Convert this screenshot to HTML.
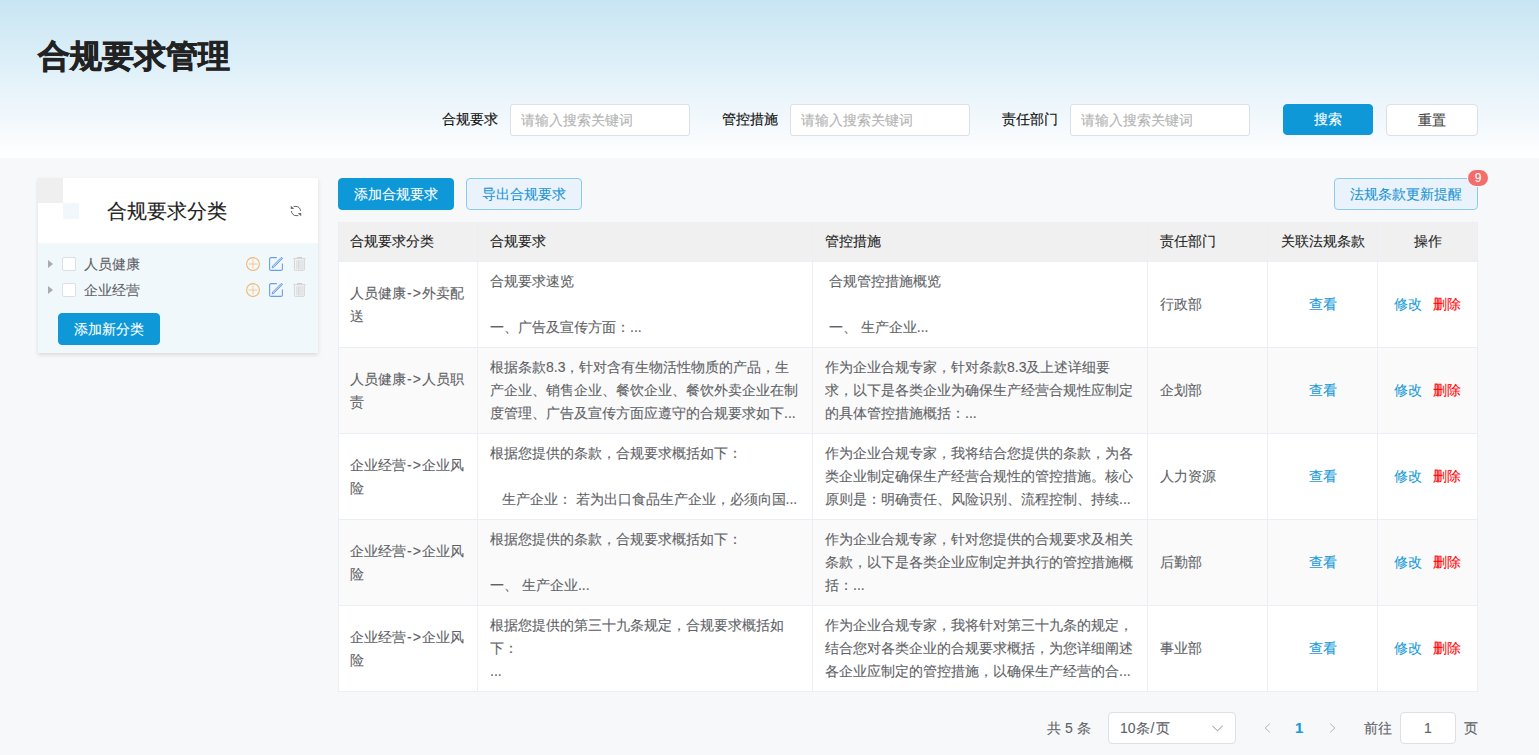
<!DOCTYPE html>
<html><head><meta charset="utf-8">
<style>
*{box-sizing:border-box;margin:0;padding:0}
html,body{width:1539px;height:755px;overflow:hidden}
body{font-family:"Liberation Sans",sans-serif;background:#f7f8fa;position:relative;color:#333;-webkit-text-stroke:0.1px currentColor}
.hdr{position:absolute;left:0;top:0;width:1539px;height:158px;background:linear-gradient(180deg,#c8e5f3 0%,#d8edf7 30%,#e8f4fa 58%,#f4f9fd 80%,#ffffff 100%)}
.abs{position:absolute}
.title{left:38px;top:34px;font-size:32px;font-weight:bold;-webkit-text-stroke:0.7px #222;color:#222;line-height:44px;white-space:nowrap}
.lbl{font-size:14px;color:#111;-webkit-text-stroke:0.15px #111;line-height:20px;white-space:nowrap}
.inp{background:#fff;border:1px solid #dcdfe6;border-radius:3px;height:32px;width:180px;font-size:14px;color:#b3b3b3;line-height:30px;padding-left:10px;white-space:nowrap}
.btn{border-radius:4px;font-size:14px;text-align:center;white-space:nowrap}
.bp{background:#0e98d8;color:#fff;border:1px solid #0e98d8}
.bw{background:#fff;color:#444;border:1px solid #dcdfe6}
.bl{background:#eaf3fb;color:#1b94d4;border:1px solid #8ccbef}

.panel{left:38px;top:178px;width:280px;height:175px;background:#f1f8fc;box-shadow:0 2px 4px rgba(0,0,0,0.12)}
.phead{position:absolute;left:0;top:0;width:280px;height:65px;background:#fff}
.ptitle{position:absolute;left:69px;top:19px;font-size:20px;color:#222;line-height:28px;white-space:nowrap}
.trow{position:absolute;left:0;width:280px;height:26px}
.tri{position:absolute;left:10px;top:8px;width:0;height:0;border-top:4px solid transparent;border-bottom:4px solid transparent;border-left:5px solid #a8abb2}
.chk{position:absolute;left:24px;top:5px;width:14px;height:14px;border:1px solid #dcdfe6;border-radius:2px;background:#fff}
.tlbl{position:absolute;left:46px;top:2px;font-size:14px;line-height:20px;color:#606266;white-space:nowrap}
.ico{position:absolute;top:5px;width:14px;height:14px}

.tbl{left:338px;top:222px;width:1140px;border-left:1px solid #ebeef5;border-top:0}
table{border-collapse:separate;border-spacing:0;table-layout:fixed;width:1139px}
th:first-child,td:first-child{padding-left:11px!important}
th,td{border-right:1px solid #ebeef5;border-bottom:1px solid #ebeef5;font-size:14px;text-align:left;padding:0 12px;white-space:nowrap;overflow:hidden}
th{height:40px;background:#f0f0f0;color:#222;font-weight:normal;line-height:20px;padding-bottom:2px}
td{height:86px;color:#606266;line-height:23px;vertical-align:middle}
tr.st td{background:#fafafa}
tr.w td{background:#fff}
td.c,th.c{text-align:center}
.lk{color:#1a9bd7}
.ar{letter-spacing:1px;padding-left:1px}
.rd{color:#f00}
</style></head><body>
<div class="hdr"></div>
<div class="abs title">合规要求管理</div>

<div class="abs lbl" style="left:442px;top:109px">合规要求</div>
<div class="abs inp" style="left:510px;top:104px">请输入搜索关键词</div>
<div class="abs lbl" style="left:722px;top:109px">管控措施</div>
<div class="abs inp" style="left:790px;top:104px">请输入搜索关键词</div>
<div class="abs lbl" style="left:1002px;top:109px">责任部门</div>
<div class="abs inp" style="left:1070px;top:104px">请输入搜索关键词</div>
<div class="abs btn bp" style="left:1283px;top:104px;width:90px;height:31px;line-height:29px">搜索</div>
<div class="abs btn bw" style="left:1386px;top:104px;width:92px;height:32px;line-height:30px">重置</div>

<!-- left panel -->
<div class="abs panel">
  <div class="phead">
    <div style="position:absolute;left:0;top:0;width:25px;height:25px;background:#efefef"></div>
    <div style="position:absolute;left:25px;top:25px;width:16px;height:16px;background:#f1f8fc"></div>
    <div class="ptitle">合规要求分类</div>
    <svg style="position:absolute;left:252px;top:27px" width="12" height="12" viewBox="0 0 12 12"><path d="M3.6 1.4H6A4.5 4.5 0 0 1 10.5 5.9" fill="none" stroke="#666" stroke-width="1"/><path d="M0.8 0.8V3.9L4.3 3.7Z" fill="#666"/><path d="M1.5 6A4.5 4.5 0 0 0 6 10.6H8.4" fill="none" stroke="#666" stroke-width="1"/><path d="M11.2 11.2V8.1L7.7 8.3Z" fill="#666"/></svg>
  </div>
  <div class="trow" style="top:74px">
    <div class="tri"></div><div class="chk"></div><div class="tlbl">人员健康</div>
    <svg class="ico" style="left:208px" viewBox="0 0 14 14"><circle cx="7" cy="7" r="6.4" fill="none" stroke="#f4b466" stroke-width="1.05"/><path d="M7 2.6V11.4M2.6 7H11.4" stroke="#f6c488" stroke-width="0.9"/></svg>
    <svg class="ico" style="left:231px" viewBox="0 0 14 14"><path d="M7.8 0.6H2.1Q0.6 0.6 0.6 2.1V11.9Q0.6 13.4 2.1 13.4H11.9Q13.4 13.4 13.4 11.9V6.6" fill="none" stroke="#6a9ee6" stroke-width="1.1"/><path d="M12.1 0.6Q13.3 0.4 13.5 1.6L5.2 9.9L3.1 10.9L4 8.7Z" fill="#d8e6fa" stroke="#5b93e4" stroke-width="0.9"/><path d="M4.8 8.9L12.3 1.6" stroke="#8fb5ee" stroke-width="0.6"/></svg>
    <svg class="ico" style="left:255px" viewBox="0 0 14 14"><path d="M0.4 1.7H12.6" stroke="#d6d6d6" stroke-width="1.3"/><path d="M4.2 1V0.5H8.8V1" stroke="#d6d6d6" stroke-width="0.9"/><path d="M1.4 2.4V12.7Q1.4 13.4 2.2 13.4H10.6Q11.4 13.4 11.4 12.7V2.4" fill="#f1f2f4" stroke="#d6d6d6" stroke-width="1"/><rect x="5.6" y="3" width="5.2" height="9.8" fill="#e4e5e8"/><path d="M3.9 3.4V12.2M5.6 3.4V12.2" stroke="#d0d0d0" stroke-width="0.8"/></svg>
  </div>
  <div class="trow" style="top:100px">
    <div class="tri"></div><div class="chk"></div><div class="tlbl">企业经营</div>
    <svg class="ico" style="left:208px" viewBox="0 0 14 14"><circle cx="7" cy="7" r="6.4" fill="none" stroke="#f4b466" stroke-width="1.05"/><path d="M7 2.6V11.4M2.6 7H11.4" stroke="#f6c488" stroke-width="0.9"/></svg>
    <svg class="ico" style="left:231px" viewBox="0 0 14 14"><path d="M7.8 0.6H2.1Q0.6 0.6 0.6 2.1V11.9Q0.6 13.4 2.1 13.4H11.9Q13.4 13.4 13.4 11.9V6.6" fill="none" stroke="#6a9ee6" stroke-width="1.1"/><path d="M12.1 0.6Q13.3 0.4 13.5 1.6L5.2 9.9L3.1 10.9L4 8.7Z" fill="#d8e6fa" stroke="#5b93e4" stroke-width="0.9"/><path d="M4.8 8.9L12.3 1.6" stroke="#8fb5ee" stroke-width="0.6"/></svg>
    <svg class="ico" style="left:255px" viewBox="0 0 14 14"><path d="M0.4 1.7H12.6" stroke="#d6d6d6" stroke-width="1.3"/><path d="M4.2 1V0.5H8.8V1" stroke="#d6d6d6" stroke-width="0.9"/><path d="M1.4 2.4V12.7Q1.4 13.4 2.2 13.4H10.6Q11.4 13.4 11.4 12.7V2.4" fill="#f1f2f4" stroke="#d6d6d6" stroke-width="1"/><rect x="5.6" y="3" width="5.2" height="9.8" fill="#e4e5e8"/><path d="M3.9 3.4V12.2M5.6 3.4V12.2" stroke="#d0d0d0" stroke-width="0.8"/></svg>
  </div>
  <div class="abs btn bp" style="left:20px;top:135px;width:102px;height:32px;line-height:30px">添加新分类</div>
</div>

<!-- toolbar -->
<div class="abs btn bp" style="left:338px;top:178px;width:116px;height:32px;line-height:30px">添加合规要求</div>
<div class="abs btn bl" style="left:466px;top:178px;width:116px;height:32px;line-height:30px">导出合规要求</div>
<div class="abs btn bl" style="left:1334px;top:178px;width:144px;height:32px;line-height:30px">法规条款更新提醒</div>
<div class="abs" style="left:1467px;top:169px;width:22px;height:18px;border-radius:10px;border:1px solid #fff;background:#f46d6b;color:#fff;font-size:12px;line-height:16px;text-align:center">9</div>

<!-- table -->
<div class="abs tbl">
<table>
<colgroup><col style="width:139px"><col style="width:335px"><col style="width:335px"><col style="width:120px"><col style="width:110px"><col style="width:100px"></colgroup>
<tr><th>合规要求分类</th><th>合规要求</th><th>管控措施</th><th>责任部门</th><th class="c">关联法规条款</th><th class="c">操作</th></tr>
<tr class="w">
<td>人员健康<span class="ar">-&gt;</span>外卖配<br>送</td>
<td>合规要求速览<br>&nbsp;<br>一、广告及宣传方面：...</td>
<td>&nbsp;合规管控措施概览<br>&nbsp;<br>&nbsp;一、 生产企业...</td>
<td>行政部</td>
<td class="c"><span class="lk">查看</span></td>
<td class="c"><span class="lk">修改</span>&nbsp;&nbsp;&nbsp;<span class="rd">删除</span></td>
</tr>
<tr class="st">
<td>人员健康<span class="ar">-&gt;</span>人员职<br>责</td>
<td>根据条款8.3，针对含有生物活性物质的产品，生<br>产企业、销售企业、餐饮企业、餐饮外卖企业在制<br>度管理、广告及宣传方面应遵守的合规要求如下...</td>
<td>作为企业合规专家，针对条款8.3及上述详细要<br>求，以下是各类企业为确保生产经营合规性应制定<br>的具体管控措施概括：...</td>
<td>企划部</td>
<td class="c"><span class="lk">查看</span></td>
<td class="c"><span class="lk">修改</span>&nbsp;&nbsp;&nbsp;<span class="rd">删除</span></td>
</tr>
<tr class="w">
<td>企业经营<span class="ar">-&gt;</span>企业风<br>险</td>
<td>根据您提供的条款，合规要求概括如下：<br>&nbsp;<br>&nbsp;&nbsp;&nbsp;生产企业： 若为出口食品生产企业，必须向国...</td>
<td>作为企业合规专家，我将结合您提供的条款，为各<br>类企业制定确保生产经营合规性的管控措施。核心<br>原则是：明确责任、风险识别、流程控制、持续...</td>
<td>人力资源</td>
<td class="c"><span class="lk">查看</span></td>
<td class="c"><span class="lk">修改</span>&nbsp;&nbsp;&nbsp;<span class="rd">删除</span></td>
</tr>
<tr class="st">
<td>企业经营<span class="ar">-&gt;</span>企业风<br>险</td>
<td>根据您提供的条款，合规要求概括如下：<br>&nbsp;<br>一、 生产企业...</td>
<td>作为企业合规专家，针对您提供的合规要求及相关<br>条款，以下是各类企业应制定并执行的管控措施概<br>括：...</td>
<td>后勤部</td>
<td class="c"><span class="lk">查看</span></td>
<td class="c"><span class="lk">修改</span>&nbsp;&nbsp;&nbsp;<span class="rd">删除</span></td>
</tr>
<tr class="w">
<td>企业经营<span class="ar">-&gt;</span>企业风<br>险</td>
<td>根据您提供的第三十九条规定，合规要求概括如<br>下：<br>...</td>
<td>作为企业合规专家，我将针对第三十九条的规定，<br>结合您对各类企业的合规要求概括，为您详细阐述<br>各企业应制定的管控措施，以确保生产经营的合...</td>
<td>事业部</td>
<td class="c"><span class="lk">查看</span></td>
<td class="c"><span class="lk">修改</span>&nbsp;&nbsp;&nbsp;<span class="rd">删除</span></td>
</tr>
</table>
</div>

<!-- pagination -->
<div class="abs" style="left:1047px;top:718px;font-size:14px;line-height:20px;color:#606266;white-space:nowrap">共 5 条</div>
<div class="abs" style="left:1108px;top:712px;width:128px;height:32px;background:#fff;border:1px solid #dcdfe6;border-radius:4px">
  <div class="abs" style="left:11px;top:5px;font-size:14px;line-height:20px;color:#606266;white-space:nowrap">10条<span style="padding:0 2px 0 1px">/</span>页</div>
  <svg class="abs" style="left:103px;top:12px" width="11" height="7" viewBox="0 0 11 7"><path d="M0.5 0.8L5.5 5.8L10.5 0.8" fill="none" stroke="#b0b3b8" stroke-width="1.1"/></svg>
</div>
<svg class="abs" style="left:1264px;top:723px" width="7" height="10" viewBox="0 0 7 10"><path d="M5.8 0.6L1.2 5L5.8 9.4" fill="none" stroke="#b0b3b8" stroke-width="1"/></svg>
<div class="abs" style="left:1295px;top:718px;font-size:15px;line-height:20px;color:#1a9bd7;font-weight:bold">1</div>
<svg class="abs" style="left:1329px;top:723px" width="7" height="10" viewBox="0 0 7 10"><path d="M1.2 0.6L5.8 5L1.2 9.4" fill="none" stroke="#b0b3b8" stroke-width="1"/></svg>
<div class="abs" style="left:1364px;top:718px;font-size:14px;line-height:20px;color:#606266;white-space:nowrap">前往</div>
<div class="abs" style="left:1400px;top:712px;width:56px;height:32px;background:#fff;border:1px solid #dcdfe6;border-radius:4px;text-align:center;font-size:14px;line-height:30px;color:#606266">1</div>
<div class="abs" style="left:1464px;top:718px;font-size:14px;line-height:20px;color:#606266;white-space:nowrap">页</div>
</body></html>
